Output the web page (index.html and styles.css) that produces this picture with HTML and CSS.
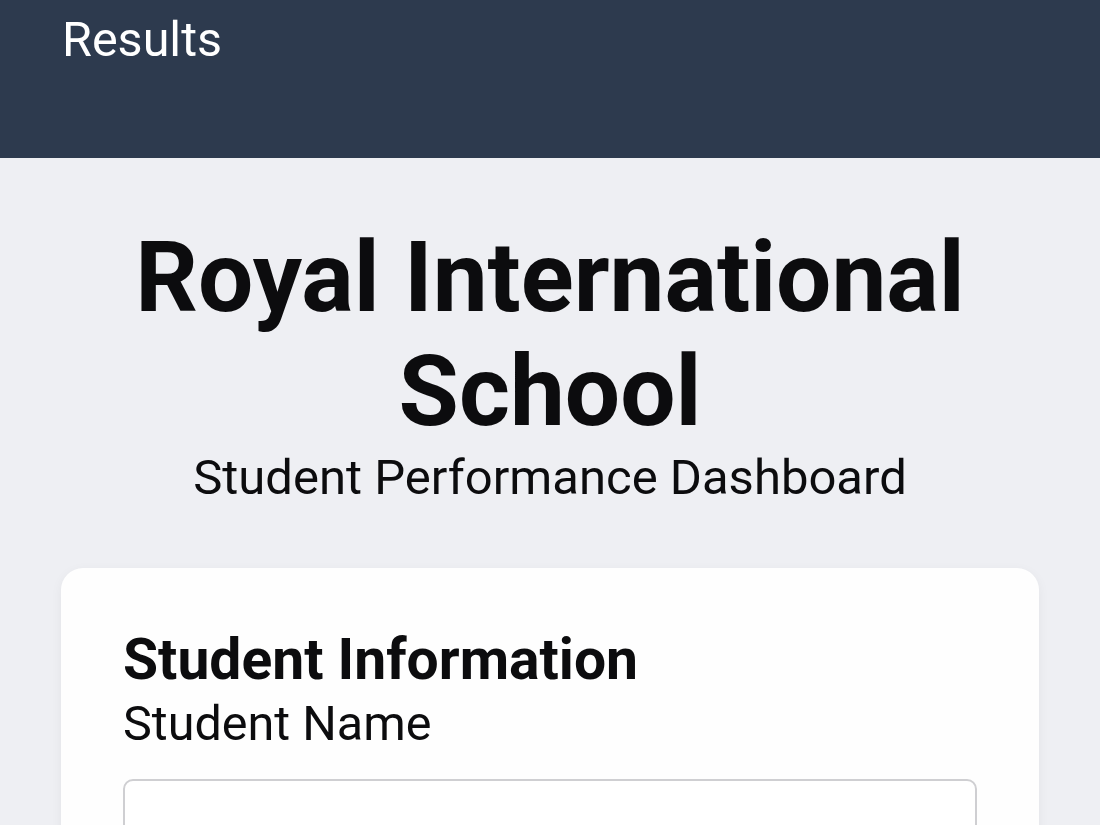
FILE: index.html
```html
<!DOCTYPE html>
<html lang="en">
<head>
<meta charset="utf-8">
<title>Royal International School</title>
<link rel="stylesheet" href="styles.css">
</head>
<body>
<header class="topbar">
  <nav class="nav">
    <a class="nav-link" href="#">Results</a>
  </nav>
</header>
<main class="page">
  <section class="hero">
    <h1 class="hero-title">Royal International School</h1>
    <p class="hero-sub">Student Performance Dashboard</p>
  </section>
  <section class="card">
    <h2 class="card-title">Student Information</h2>
    <label class="field-label" for="name">Student Name</label>
    <input class="field-input" id="name" type="text">
  </section>
</main>
</body>
</html>
```

FILE: styles.css
```css
* { box-sizing: border-box; }
html, body { margin: 0; padding: 0; }
body {
  font-family: Roboto, "Liberation Sans", sans-serif;
  background: #eeeff3;
  color: #0c0c0e;
  overflow: hidden;
  height: 825px;
}
.topbar {
  background: #2d3a4e;
  height: 158px;
  padding: 0 62px;
}
.nav {
  display: flex;
}
.nav-link {
  color: #ffffff;
  text-decoration: none;
  font-size: 48.5px;
  line-height: 48.5px;
  padding-top: 16px;
}
.page {
  padding: 0 61px;
}
.hero {
  text-align: center;
  padding-top: 63px;
}
.hero-title {
  margin: 0;
  font-size: 98px;
  font-weight: 700;
  line-height: 114px;
  padding: 0 60px;
}
.hero-sub {
  margin: 1px 0 0;
  font-size: 49px;
  line-height: 56px;
}
.card {
  margin-top: 62px;
  background: #fefefe;
  border-radius: 22px;
  box-shadow: 0 3px 12px rgba(0,0,0,0.05);
  padding: 59px 62px 40px;
  display: flex;
  flex-direction: column;
}
.card-title {
  margin: 0;
  font-size: 57px;
  line-height: 66px;
  font-weight: 700;
}
.field-label {
  margin-top: 3px;
  font-size: 48.5px;
  line-height: 56px;
}
.field-input {
  margin-top: 27px;
  height: 90px;
  border: 2px solid #cfcfd2;
  border-radius: 10px;
  background: #fff;
  font: inherit;
}
```
